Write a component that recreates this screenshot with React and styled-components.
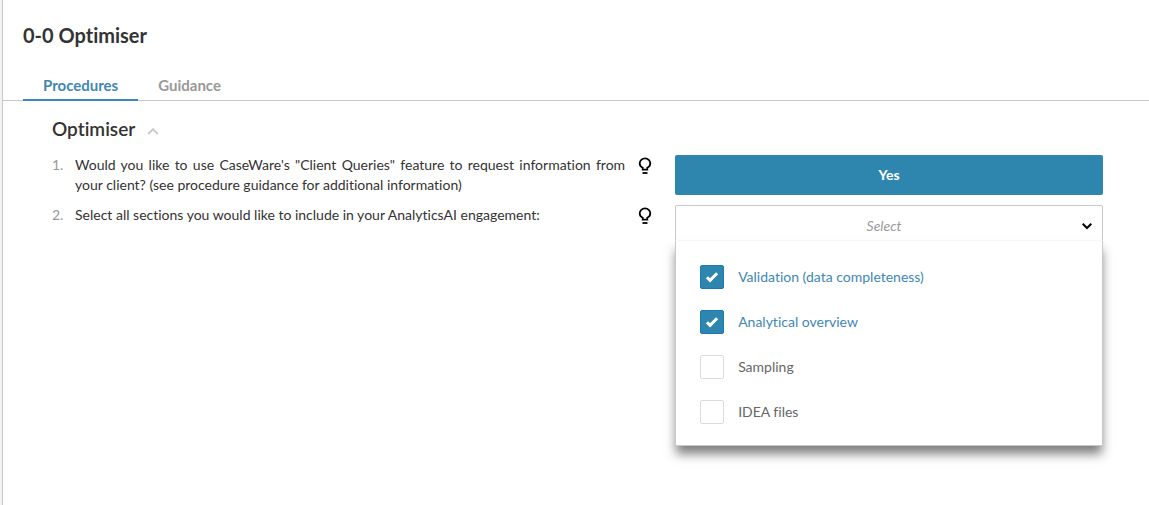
import React, { useState } from "react";
import styled, { createGlobalStyle, css } from "styled-components";

const blue = "#2e86af";

const GlobalStyle = createGlobalStyle`
  *, *::before, *::after { box-sizing: border-box; }
  body {
    margin: 0;
    background: #fff;
    color: #333;
    font: 400 14px/20px Lato, "Liberation Sans", sans-serif;
    font-variant-ligatures: none;
  }
  button, input { font: inherit; font-variant-ligatures: inherit; margin: 0; }
`;

const Page = styled.main`
  min-height: 100vh;
  border-left: 2px solid #f2f2f2;
`;

const Sheet = styled.div`
  min-height: 100vh;
  padding-top: 20px;
  border-left: 1px solid #c8c8c8;
`;

const Title = styled.h1`
  margin: 0;
  padding-left: 20px;
  font-size: 20px;
  line-height: 30px;
  font-weight: 700;
`;

const Tabs = styled.div`
  display: flex;
  margin-top: 20px;
  padding-left: 20px;
  border-bottom: 1px solid #c8c8c8;
`;

const Tab = styled.button`
  height: 31px;
  margin-bottom: -1px;
  padding: 0 20px;
  border: 0;
  border-bottom: 2px solid ${(p) => (p.$active ? "#3f87b5" : "transparent")};
  background: none;
  color: ${(p) => (p.$active ? "#3f87b5" : "#999")};
  font-size: 15px;
  line-height: 28px;
  font-weight: 700;
  cursor: pointer;
`;

const Section = styled.section`
  padding: 15px 46px 40px 49px;
`;

const SectionTitle = styled.h2`
  display: flex;
  align-items: center;
  gap: 12px;
  margin: 0 0 13px;
  font-size: 19px;
  line-height: 26px;
  font-weight: 600;
`;

const Collapse = styled.button`
  display: flex;
  padding: 4px 0 0;
  border: 0;
  background: none;
  color: #c8c8c8;
  cursor: pointer;
`;

const Questions = styled.ol`
  display: grid;
  gap: 10px;
  margin: 0;
  padding: 0;
  list-style: none;
`;

const Question = styled.li`
  display: grid;
  grid-template-columns: 23px 9fr 50px 7fr;
  align-items: start;
`;

const Num = styled.span`
  color: #999;
`;

const Prompt = styled.p`
  margin: 0;
  text-align: justify;
`;

const Hint = styled.button`
  display: flex;
  justify-self: start;
  margin-left: 13px;
  padding: 2px 0 0;
  border: 0;
  background: none;
  color: #000;
  cursor: pointer;
`;

const Answer = styled.button`
  width: 100%;
  height: 40px;
  padding: 0;
  border: 0;
  border-radius: 2px;
  background: ${blue};
  color: #fff;
  font-weight: 700;
  cursor: pointer;
`;

const Dropdown = styled.div`
  position: relative;
`;

const Trigger = styled.button`
  display: flex;
  align-items: center;
  width: 100%;
  height: 42px;
  padding: 0 10px;
  border: 1px solid #c8c8c8;
  border-radius: 2px;
  background: #fff;
  color: #000;
  cursor: pointer;
`;

const Placeholder = styled.span`
  flex: 1;
  color: #999;
  font-style: italic;
`;

const Menu = styled.fieldset`
  position: absolute;
  top: 35px;
  left: 0;
  right: 0;
  display: grid;
  gap: 21px;
  min-width: 0;
  margin: 0;
  padding: 24px 24px 21px;
  border: 1px solid #c8c8c8;
  border-top-color: #f8f8f8;
  background: #fff;
  box-shadow: 0 9px 10px -1px rgba(0, 0, 0, 0.5);
`;

const Option = styled.label`
  display: flex;
  align-items: center;
  gap: 14px;
  color: ${(p) => (p.$checked ? "#3f87b5" : "#666")};
  cursor: pointer;
`;

const Box = styled.span`
  display: grid;
  width: 24px;
  height: 24px;
  > * { grid-area: 1 / 1; place-self: center; }
  > svg { pointer-events: none; z-index: 1; }
`;

const Check = styled.input`
  appearance: none;
  width: 24px;
  height: 24px;
  border: 1px solid #dcdcdc;
  border-radius: 2px;
  background: #fff;
  ${(p) => p.checked && css`
    border-color: #1a7bb0;
    background: ${blue};
  `}
`;

const Bulb = () => (
  <svg width="14" height="18" viewBox="0 0 14 18" fill="none" stroke="currentColor" strokeWidth="1.8" aria-hidden="true">
    <path d="M4.7 12.7V10.7C2.9 9.900 1.700 8.400 1.700 6.500A5.300 5.100 0 0 1 12.300 6.500C12.300 8.400 11.100 9.900 9.300 10.700V12.700Z" />
    <path d="M4.500 16H9.500" />
  </svg>
);

const Caret = () => (
  <svg width="10" height="7" viewBox="0 0 10 7" fill="none" stroke="currentColor" strokeWidth="2" aria-hidden="true">
    <path d="M0.700 0.700L5 5L9.300 0.700" />
  </svg>
);

const CaretUp = () => (
  <svg width="12" height="7" viewBox="0 0 12 7" fill="none" stroke="currentColor" strokeWidth="1.800" aria-hidden="true">
    <path d="M1.200 6L6 1.200L10.800 6" />
  </svg>
);

const Tick = () => (
  <svg width="14" height="12" viewBox="0 0 14 12" fill="none" stroke="#fff" strokeWidth="3" aria-hidden="true">
    <path d="M1.900 6.200L5.100 9.400L12.100 2.200" />
  </svg>
);

const sections = ["Validation (data completeness)", "Analytical overview", "Sampling", "IDEA files"];

export default function App() {
  const [tab, setTab] = useState("Procedures");
  const [open, setOpen] = useState(true);
  const [chosen, setChosen] = useState(sections.slice(0, 2));
  const toggle = (name) =>
    setChosen((c) => (c.includes(name) ? c.filter((n) => n !== name) : [...c, name]));

  return (
    <Page>
      <GlobalStyle />
      <Sheet>
        <Title>0-0 Optimiser</Title>
        <Tabs role="tablist">
          {["Procedures", "Guidance"].map((name) => (
            <Tab key={name} role="tab" aria-selected={tab === name} $active={tab === name} onClick={() => setTab(name)}>
              {name}
            </Tab>
          ))}
        </Tabs>
        <Section>
          <SectionTitle>
            Optimiser
            <Collapse aria-label="Collapse section"><CaretUp /></Collapse>
          </SectionTitle>
          <Questions>
            <Question>
              <Num>1.</Num>
              <Prompt>
                Would you like to use CaseWare's "Client Queries" feature to request information from your client? (see
                procedure guidance for additional information)
              </Prompt>
              <Hint aria-label="Show guidance"><Bulb /></Hint>
              <Answer>Yes</Answer>
            </Question>
            <Question>
              <Num>2.</Num>
              <Prompt>Select all sections you would like to include in your AnalyticsAI engagement:</Prompt>
              <Hint aria-label="Show guidance"><Bulb /></Hint>
              <Dropdown>
                <Trigger aria-expanded={open} onClick={() => setOpen(!open)}>
                  <Placeholder>Select</Placeholder>
                  <Caret />
                </Trigger>
                {open && (
                  <Menu aria-label="Sections">
                    {sections.map((name) => {
                      const checked = chosen.includes(name);
                      return (
                        <Option key={name} $checked={checked}>
                          <Box>
                            <Check type="checkbox" checked={checked} onChange={() => toggle(name)} />
                            {checked && <Tick />}
                          </Box>
                          {name}
                        </Option>
                      );
                    })}
                  </Menu>
                )}
              </Dropdown>
            </Question>
          </Questions>
        </Section>
      </Sheet>
    </Page>
  );
}
